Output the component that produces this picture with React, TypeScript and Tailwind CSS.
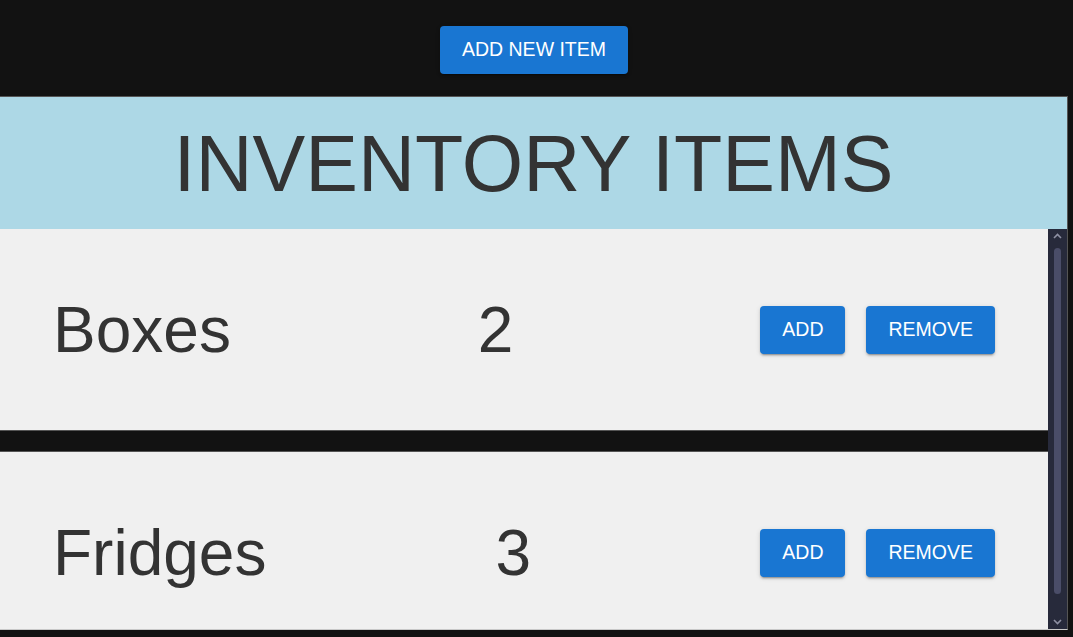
import React from "react";

const items = [
  { name: "Boxes", count: 2 },
  { name: "Fridges", count: 3 },
];

const btn =
  "bg-[#1976d2] text-white text-[19.5px] leading-none uppercase rounded-[4px] px-[22px] h-[48px] shadow-[0_3px_1px_-2px_rgba(0,0,0,0.2),0_2px_2px_0_rgba(0,0,0,0.14),0_1px_5px_0_rgba(0,0,0,0.12)]";

const ItemRow: React.FC<{ name: string; count: number }> = ({ name, count }) => {
  return (
    <div className="shrink-0 h-[201px] bg-[#f0f0f0] flex items-center justify-between pl-[53px] pr-[53px] text-[#333] text-[64px] leading-none">
      <span>{name}</span>
      <span>{count}</span>
      <div className="flex gap-[21px]">
        <button className={btn}>Add</button>
        <button className={btn}>Remove</button>
      </div>
    </div>
  );
};

const Chevron: React.FC<{ up?: boolean }> = ({ up }) => (
  <svg width="9" height="6" viewBox="0 0 9 6" className="text-[#8e90a3]">
    <path
      d={up ? "M1 5 L4.5 1.5 L8 5" : "M1 1 L4.5 4.5 L8 1"}
      fill="none"
      stroke="currentColor"
      strokeWidth="1.6"
    />
  </svg>
);

export default function App() {
  return (
    <div className="min-h-screen bg-[#121212] font-['Liberation_Sans',Arial,sans-serif]">
      <div className="w-[1068px]">
        <div className="flex justify-center pt-[26px] pb-[22px]">
          <button className={btn + " h-[47px]"}>Add New Item</button>
        </div>

        <div className="h-[534px] flex flex-col border-t border-r border-b border-[#555] border-b-[#c8c8c8]">
          {/* Title */}
          <div className="h-[132px] shrink-0 bg-[#add8e6] flex items-center justify-center text-[#333] text-[79px] leading-none">
            INVENTORY ITEMS
          </div>

          {/* List + scrollbar */}
          <div className="flex flex-1 min-h-0">
            <div className="flex-1 overflow-hidden flex flex-col">
              <ItemRow {...items[0]} />
              <div className="shrink-0 h-[22px] bg-[#121212] border-y border-[#555]" />
              <ItemRow {...items[1]} />
            </div>
            <div className="w-[19px] bg-[#272a3b] flex flex-col items-center py-[4px]">
              <Chevron up />
              <div className="flex-1 w-[7px] bg-[#4a4d68] rounded-full mt-[9px] mb-[25px]" />
              <Chevron />
            </div>
          </div>
        </div>
      </div>
    </div>
  );
}
